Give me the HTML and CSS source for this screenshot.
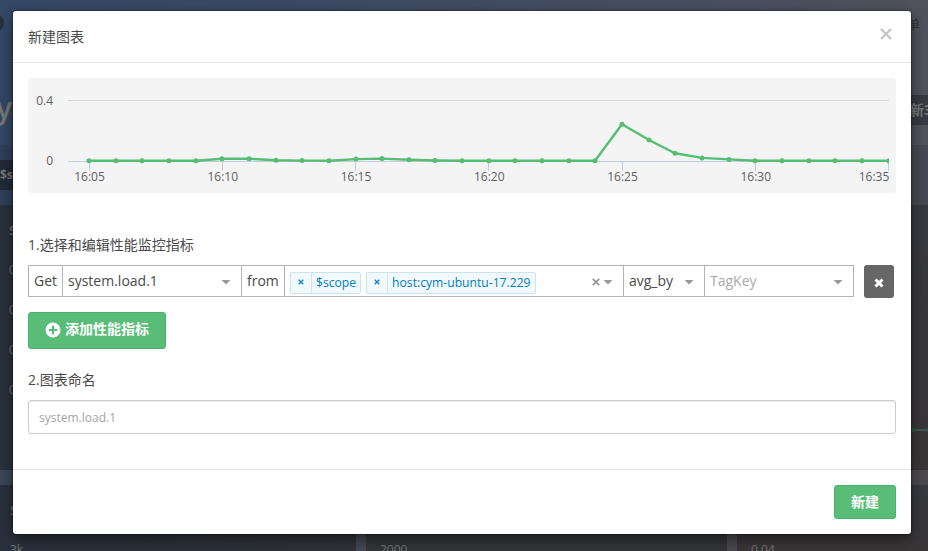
FILE: index.html
```
<!DOCTYPE html>
<html lang="zh-CN">
<head>
<meta charset="utf-8">
<title>新建图表</title>
<link rel="stylesheet" href="styles.css">
</head>
<body>
<div class="dashboard">
  <header class="masthead"><i class="avatar"></i><span class="menu-text">单</span><h1 class="page-title">y</h1><span class="refresh">新3</span></header>
  <div class="toolbar"><span class="scope-button">$s</span></div>
  <div class="card-row">
    <section class="card">
      <div class="card-name">S</div>
      <div class="card-tick">0</div><div class="card-tick">0</div><div class="card-tick">0</div><div class="card-tick">0</div>
    </section>
    <section class="card"></section>
    <section class="card"><svg class="card-line" width="192" height="10" viewBox="0 0 192 10"><path d="M170 5H192" stroke="#527270"/><circle cx="176" cy="5" r="2" fill="#285d38"/><path d="M189 5L192 1V8Z" fill="#285d38"/></svg></section>
  </div>
  <div class="card-row lower">
    <section class="card"><div class="card-name">S</div><div class="card-scale">3k</div></section>
    <section class="card"><div class="card-name">S</div><div class="card-scale">2000</div></section>
    <section class="card"><div class="card-name">S</div><div class="card-scale">0.04</div></section>
  </div>
</div>

<div class="modal">
  <div class="modal-header">
    <h4 class="modal-title">新建图表</h4>
    <svg class="close" width="12" height="12" viewBox="0 0 12 12"><path d="M1 1L11 11M11 1L1 11"/></svg>
  </div>
  <div class="modal-body">
    <svg class="chart" width="868" height="115" viewBox="28 78 868 115">
      <defs><clipPath id="plot"><rect x="68" y="90" width="821" height="90"/></clipPath></defs>
      <path class="grid-line" d="M68 100.5H889"/>
      <path class="axis" d="M68 161.5H889M89.5 161V171M222.5 161V171M355.5 161V171M488.5 161V171M622.5 161V171M755.5 161V171M888.5 161V171"/>
      <g clip-path="url(#plot)">
        <polyline class="series" points="89,160.8 116,160.8 142,160.8 169,160.8 196,160.8 222,158.7 249,158.7 276,160.2 302,160.6 329,160.8 356,159.1 382,158.6 409,159.8 435,160.5 462,160.8 489,160.8 515,160.8 542,160.8 569,160.8 595,160.8 622,124.3 649,140 675,153.3 702,157.9 729,159.4 755,160.8 782,160.8 809,160.8 835,160.8 862,160.8 889,160.8"/>
        <g class="points">
          <circle cx="89" cy="160.8" r="2.5"/><circle cx="116" cy="160.8" r="2.5"/><circle cx="142" cy="160.8" r="2.5"/><circle cx="169" cy="160.8" r="2.5"/><circle cx="196" cy="160.8" r="2.5"/><circle cx="222" cy="158.7" r="2.5"/><circle cx="249" cy="158.7" r="2.5"/><circle cx="276" cy="160.2" r="2.5"/><circle cx="302" cy="160.6" r="2.5"/><circle cx="329" cy="160.8" r="2.5"/><circle cx="356" cy="159.1" r="2.5"/><circle cx="382" cy="158.6" r="2.5"/><circle cx="409" cy="159.8" r="2.5"/><circle cx="435" cy="160.5" r="2.5"/><circle cx="462" cy="160.8" r="2.5"/><circle cx="489" cy="160.8" r="2.5"/><circle cx="515" cy="160.8" r="2.5"/><circle cx="542" cy="160.8" r="2.5"/><circle cx="569" cy="160.8" r="2.5"/><circle cx="595" cy="160.8" r="2.5"/><circle cx="622" cy="124.3" r="2.5"/><circle cx="649" cy="140" r="2.5"/><circle cx="675" cy="153.3" r="2.5"/><circle cx="702" cy="157.9" r="2.5"/><circle cx="729" cy="159.4" r="2.5"/><circle cx="755" cy="160.8" r="2.5"/><circle cx="782" cy="160.8" r="2.5"/><circle cx="809" cy="160.8" r="2.5"/><circle cx="835" cy="160.8" r="2.5"/><circle cx="862" cy="160.8" r="2.5"/><circle cx="889" cy="160.8" r="2.5"/>
        </g>
      </g>
      <g class="labels">
        <text x="53" y="105" text-anchor="end">0.4</text><text x="53" y="165" text-anchor="end">0</text>
        <g text-anchor="middle"><text x="89.5" y="181">16:05</text><text x="222.8" y="181">16:10</text><text x="356" y="181">16:15</text><text x="489.3" y="181">16:20</text><text x="622.5" y="181">16:25</text><text x="755.8" y="181">16:30</text></g>
        <text x="889.3" y="181" text-anchor="end">16:35</text>
      </g>
    </svg>
    <div class="field-label metrics-label">1.选择和编辑性能监控指标</div>
    <div class="query-row">
      <div class="query">
        <span class="cell get">Get</span>
        <span class="cell metric">system.load.1<i class="caret"></i></span>
        <span class="cell from">from</span>
        <span class="cell scope">
          <span class="tag"><b><svg width="6" height="6" viewBox="0 0 6 6"><path d="M.7 .7L5.3 5.3M5.3 .7L.7 5.3"/></svg></b><span>$scope</span></span>
          <span class="tag"><b><svg width="6" height="6" viewBox="0 0 6 6"><path d="M.7 .7L5.3 5.3M5.3 .7L.7 5.3"/></svg></b><span>host:cym-ubuntu-17.229</span></span>
          <svg class="clear" width="8" height="8" viewBox="0 0 8 8"><path d="M.8 .8L7.2 7.2M7.2 .8L.8 7.2"/></svg><i class="caret"></i>
        </span>
        <span class="cell aggregate">avg_by<i class="caret"></i></span>
        <span class="cell tag-key">TagKey<i class="caret"></i></span>
      </div>
      <button class="remove" aria-label="删除"><svg width="10" height="10" viewBox="0 0 10 10"><path d="M1.5 1.5L8.5 8.5M8.5 1.5L1.5 8.5"/></svg></button>
    </div>
    <button class="button add"><svg width="16" height="16" viewBox="0 0 16 16"><circle cx="8" cy="8" r="7.5" fill="#fff"/><path d="M8 3.8V12.2M3.8 8H12.2" stroke="#59bd78" stroke-width="2.2"/></svg>添加性能指标</button>
    <div class="field-label name-label">2.图表命名</div>
    <input class="name-input" placeholder="system.load.1">
  </div>
  <div class="modal-footer"><button class="button create">新建</button></div>
</div>
</body>
</html>
```
FILE: styles.css
```
* { box-sizing: border-box; }
body {
  margin: 0;
  width: 928px;
  height: 551px;
  overflow: hidden;
  position: relative;
  font-family: "Open Sans", "Noto Sans CJK SC", sans-serif;
  font-size: 14px;
  color: #4a4a4a;
}
button, input { font-family: inherit; margin: 0; }

.dashboard {
  width: 928px;
  height: 551px;
  overflow: hidden;
  display: flex;
  flex-direction: column;
  color: #777;
  background: linear-gradient(90deg, #344866 0, #414c63 50%, #50535d 100%);
}
.masthead {
  height: 145px;
  flex: none;
  display: grid;
  grid-template: 95px 50px / 1fr 28px;
  position: relative;
}
.avatar {
  width: 18px;
  height: 18px;
  border-radius: 50%;
  background: #26303f;
  margin: 14px 0 0 -14px;
}
.menu-text { font-size: 13px; line-height: 20px; margin: 14px 0 0 7px; color: #30343c; }
.page-title { margin: -9px 0 0 -4px; font-size: 30px; line-height: 44px; font-weight: 600; }
.refresh {
  height: 30px;
  margin-left: -10px;
  padding-left: 20px;
  font-size: 14px;
  line-height: 29px;
  font-weight: 700;
  white-space: nowrap;
  background: #383b42;
}
.toolbar { height: 60px; flex: none; padding-top: 15px; background: rgba(40, 45, 55, .25); }
.scope-button {
  display: block;
  width: 60px;
  height: 30px;
  font-size: 12px;
  line-height: 30px;
  font-weight: 700;
  background: #222a37;
}
.card-row {
  height: 265px;
  flex: none;
  display: grid;
  grid-template-columns: 356px 361px 191px;
  column-gap: 10px;
  background: linear-gradient(90deg, #3c4758, #50494b);
}
.card { padding: 15px 0 0 9px; background: #343539; overflow: hidden; }
.card:first-child { background: linear-gradient(90deg, #29313d, #303238); }
.card:nth-child(3) { background: linear-gradient(#393a40, #38383c 45%, #393637); padding-left: 0; }
.card-name { font-size: 13px; line-height: 20px; font-weight: 600; margin-bottom: 20px; }
.card-tick { font-size: 12px; line-height: 20px; margin-bottom: 20px; }
.card-line { display: block; margin-top: 205px; }
.card-row.lower { margin-top: 15px; height: 66px; position: relative; }
.card-row.lower::before {
  content: "";
  position: absolute;
  inset: -15px 0 auto;
  height: 15px;
  background: linear-gradient(90deg, #3c4758, #4b494c);
}
.lower .card-name { margin-bottom: 20px; }
.lower .card { padding-left: 10px; }
.lower .card + .card { padding-left: 14px; }
.card-scale { font-size: 12px; line-height: 20px; white-space: nowrap; }

.modal {
  position: absolute;
  left: 13px;
  top: 11px;
  width: 898px;
  height: 523px;
  display: flex;
  flex-direction: column;
  background: #fff;
  border-radius: 3px;
  box-shadow: 0 5px 15px rgba(0, 0, 0, .5), 0 0 1px 1px rgba(0, 0, 0, .25);
}
.modal-header {
  height: 52px;
  flex: none;
  display: flex;
  justify-content: space-between;
  padding: 15px 19px 0 15px;
  border-bottom: 1px solid #e5e5e5;
}
.modal-title { margin: 1px 0 0; font-size: 14px; line-height: 20px; font-weight: 400; }
.close { margin-top: 2px; stroke: #c4c4c4; stroke-width: 2.3; }
.modal-body { flex: 1; display: flex; flex-direction: column; align-items: flex-start; padding: 15px 15px 0; }
.chart { display: block; flex: none; background: #f4f4f4; border-radius: 3px; }
.grid-line { stroke: #d8d8d8; }
.axis { stroke: #c0d0e0; fill: none; }
.series { fill: none; stroke: #55bd74; stroke-width: 2.4; stroke-linejoin: round; }
.points { fill: #55bd74; }
.labels { font-size: 12px; fill: #606060; }
.field-label { font-size: 14px; line-height: 20px; }
.metrics-label { margin-top: 42px; }
.query-row { display: flex; gap: 10px; margin-top: 10px; }
.query { display: flex; width: 826px; height: 32px; border: 1px solid #b4b4b4; }
.cell {
  display: flex;
  align-items: center;
  padding: 0 5px 1px;
  border-right: 1px solid #b4b4b4;
  line-height: 20px;
}
.get { width: 34px; }
.metric { width: 179px; }
.from { width: 43px; }
.scope { width: 339px; padding-top: 2px; }
.aggregate { width: 81px; }
.tag-key { flex: 1; border-right: 0; color: #aaa; }
.caret {
  width: 10px;
  height: 5px;
  margin: 3px 5px 0 auto;
  background: #999;
  clip-path: polygon(0 0, 100% 0, 50% 100%);
}
.scope .caret { margin: 1px 5px 0 3px; }
.clear { margin-left: auto; stroke: #999; stroke-width: 1.8; }
.tag {
  display: flex;
  height: 22px;
  margin: 2px 5px 0 0;
  font-size: 12.15px;
  line-height: 20px;
  color: #007eb9;
  background: #f2f9fc;
  border: 1px solid #c9e6f2;
  border-radius: 2px;
}
.tag b { width: 21px; border-right: 1px solid #c9e6f2; display: flex; justify-content: center; padding-top: 6px; }
.tag svg { stroke: #1686c4; stroke-width: 1.4; }
.tag span { padding: 0 4px; }
.remove {
  width: 30px;
  height: 33px;
  padding: 3px 0 0;
  border: 0;
  border-radius: 3px;
  background: #666;
}
.remove path { stroke: #fff; stroke-width: 3; }
.button {
  border: 1px solid #48b36a;
  border-radius: 3px;
  background: #59bd78;
  color: #fff;
  font-size: 14px;
  font-weight: 700;
  line-height: 20px;
}
.add {
  width: 138px;
  height: 37px;
  margin-top: 14px;
  padding: 0 0 3px;
  display: flex;
  align-items: center;
  justify-content: center;
  gap: 4px;
}
.add svg { margin-top: 2px; }
.name-label { margin-top: 21px; }
.name-input {
  width: 868px;
  height: 34px;
  margin-top: 10px;
  padding: 0 10px;
  border: 1px solid #ccc;
  border-radius: 3px;
  font-size: 12px;
  box-shadow: inset 0 1px 1px rgba(0, 0, 0, .075);
}
.name-input::placeholder { color: #a5a5a5; }
.modal-footer {
  height: 65px;
  flex: none;
  display: flex;
  justify-content: flex-end;
  padding: 15px 15px 0;
  border-top: 1px solid #e5e5e5;
}
.create { width: 62px; height: 34px; padding: 0; }
```
